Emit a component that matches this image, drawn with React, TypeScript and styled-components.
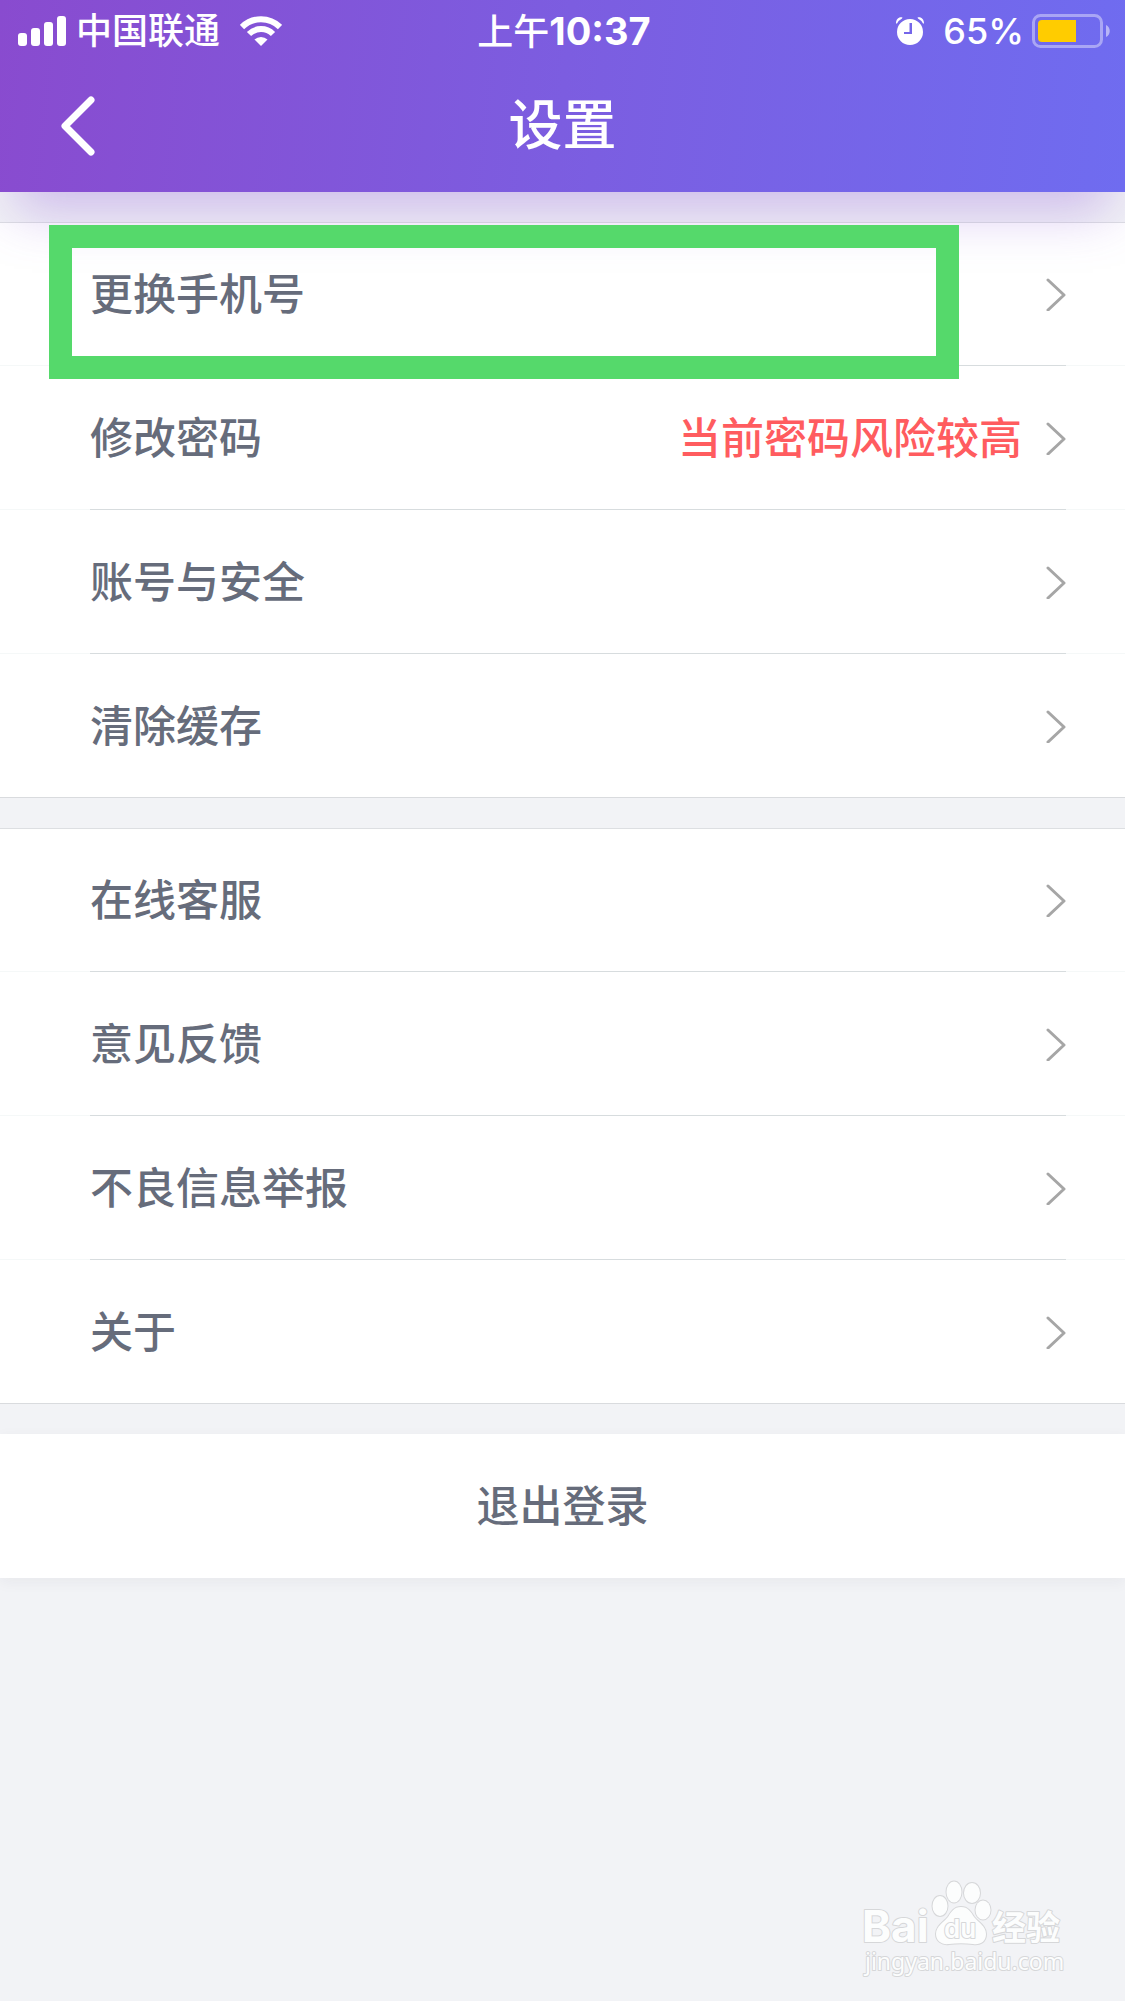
import React from 'react';
import styled, { createGlobalStyle } from 'styled-components';

const GlobalStyle = createGlobalStyle`
  *, *::before, *::after { box-sizing: border-box; }
  body {
    margin: 0;
    background: #f2f3f6;
    font-family: Inter, "Noto Sans CJK SC", sans-serif;
    color: #666c7b;
  }
`;

const Page = styled.div`
  position: relative;
  display: flex;
  flex-direction: column;
  min-height: 100vh;
`;

const Header = styled.header`
  position: relative;
  z-index: 1;
  color: #fff;
  background: linear-gradient(96deg, #894bcf 0%, #7c5de0 50%, #6f6cf0 100%);
  box-shadow: 0 34px 50px -14px rgba(140, 90, 215, 0.36);
`;

const StatusBar = styled.div`
  display: grid;
  grid-template-columns: 1fr auto 1fr;
  align-items: center;
  height: 60px;
  padding: 2px 15px 0 18px;
  font-size: 36px;
  line-height: 44px;
  font-weight: 500;
`;

const StatusGroup = styled.div<{ $end?: boolean }>`
  display: flex;
  align-items: center;
  justify-content: ${(p) => (p.$end ? 'flex-end' : 'flex-start')};
`;

const Carrier = styled.span`
  margin: 0 20px 0 10px;
`;

const Clock = styled.time`
  b {
    font-size: 38px;
    font-weight: 700;
  }
`;

const Percent = styled.span`
  margin: 0 8px 0 19px;
`;

const NavBar = styled.div`
  display: grid;
  grid-template-columns: 120px 1fr 120px;
  align-items: center;
  height: 132px;
`;

const BackButton = styled.button`
  display: flex;
  align-items: center;
  height: 100%;
  padding: 0 0 0 60px;
  border: 0;
  background: none;
  color: inherit;
  cursor: pointer;
`;

const Title = styled.h1`
  margin: 0;
  font-size: 54px;
  line-height: 80px;
  font-weight: 500;
  text-align: center;
`;

const Main = styled.main`
  display: flex;
  flex-direction: column;
  gap: 30px;
  padding-top: 30px;
`;

const Group = styled.section`
  position: relative;
`;

const List = styled.ul`
  margin: 0;
  padding: 0;
  list-style: none;
  background: #fff;
  box-shadow: inset 0 1px 0 #dddfe2, inset 0 -1px 0 #d9dbde;
`;

const Item = styled.li`
  &:not(:last-child) {
    box-shadow: inset 0 -1px 0 #f5f8f8;
  }
`;

const ItemLink = styled.a`
  display: flex;
  align-items: center;
  gap: 24px;
  height: 144px;
  margin: 0 59px 0 90px;
  font-size: 43px;
  line-height: 60px;
  font-weight: 500;
  color: inherit;
  text-decoration: none;

  ${Item}:not(:last-child) > & {
    box-shadow: inset 0 -1px 0 #d7dcde;
  }
`;

const ItemLabel = styled.span`
  flex: 1;
`;

const Warning = styled.span`
  color: #ff5c5f;
`;

const Highlight = styled.div`
  position: absolute;
  z-index: 2;
  top: 3px;
  left: 49px;
  right: 166px;
  height: 154px;
  border: 23px solid #55d96b;
  pointer-events: none;
`;

const LogoutButton = styled.button`
  height: 144px;
  border: 0;
  background: #fff;
  box-shadow: 0 4px 14px rgba(40, 44, 56, 0.05);
  color: inherit;
  font: inherit;
  font-size: 43px;
  line-height: 60px;
  font-weight: 500;
  cursor: pointer;
`;

const Watermark = styled.svg`
  position: absolute;
  right: 53px;
  bottom: 17px;

  .shape,
  text {
    fill: #fcfdfd;
    stroke: #d6d7d9;
    stroke-width: 2px;
    stroke-linejoin: round;
    paint-order: stroke;
  }
`;

const SignalIcon = () => (
  <svg width="48" height="30" viewBox="0 0 48 30" fill="currentColor" aria-hidden="true">
    <rect x="0" y="17" width="9" height="13" rx="3" />
    <rect x="13" y="12" width="9" height="18" rx="3" />
    <rect x="26" y="6" width="9" height="24" rx="3" />
    <rect x="39" y="0" width="9" height="30" rx="3" />
  </svg>
);

const WifiIcon = () => (
  <svg width="42" height="30" viewBox="0 0 42 30" fill="none" stroke="currentColor" aria-hidden="true">
    <path d="M2 11A27 27 0 0 1 40 11" strokeWidth="6" />
    <path d="M9 18A17 17 0 0 1 33 18" strokeWidth="6" />
    <path d="M14.5 23.5A9.5 9.5 0 0 1 27.5 23.5L21 30Z" fill="currentColor" stroke="none" />
  </svg>
);

const AlarmIcon = () => (
  <svg width="28" height="28" viewBox="0 0 28 28" fill="currentColor" aria-hidden="true">
    <path fillRule="evenodd" d="M14 2a13 13 0 1 0 0 26a13 13 0 0 0 0-26ZM13.5 6H16v11H8v-2h5.5Z" />
    <path d="M0 6.5C0 2 3 -.5 6.5 .5L6 1.5Q3 3 1 6.5Z" />
    <path d="M28 6.5C28 2 25 -.5 21.5 .5L22 1.5Q25 3 27 6.5Z" />
  </svg>
);

const BatteryIcon = () => (
  <svg width="78" height="34" viewBox="0 0 78 34" aria-hidden="true">
    <rect x="1.5" y="1.5" width="68" height="31" rx="7" fill="none" stroke="#fff" strokeOpacity="0.4" strokeWidth="3" />
    <path d="M10 6H44V28H10a4 4 0 0 1-4-4V10a4 4 0 0 1 4-4Z" fill="#ffcc00" />
    <path d="M74 11c5 2 5 10 0 12Z" fill="#fff" fillOpacity="0.5" />
  </svg>
);

const BackIcon = () => (
  <svg width="36" height="60" viewBox="0 0 36 60" fill="none" stroke="currentColor" strokeWidth="7" strokeLinecap="round" strokeLinejoin="round" aria-hidden="true">
    <path d="M31 4L5 30L31 56" />
  </svg>
);

const ChevronIcon = () => (
  <svg width="20" height="34" viewBox="0 0 20 34" fill="none" stroke="#a6a6a6" strokeWidth="3" strokeLinecap="round" strokeLinejoin="round" aria-hidden="true">
    <path d="M2 3L18 18L2 33" />
  </svg>
);

const BaiduWatermark = () => (
  <Watermark width="210" height="104" viewBox="0 0 210 104" role="img" aria-label="Baidu 经验">
    <text x="0" y="62" fontFamily="Inter, sans-serif" fontWeight="700" fontSize="44">Bai</text>
    <ellipse className="shape" cx="78" cy="26" rx="7.5" ry="10" />
    <ellipse className="shape" cx="92" cy="12" rx="7.5" ry="10.5" />
    <ellipse className="shape" cx="110" cy="13" rx="8" ry="10" />
    <ellipse className="shape" cx="121" cy="30" rx="7.5" ry="9.5" />
    <path className="shape" d="M99 27C106 27 109 32 112 37C116 42 124 46 124 54C124 62 118 65 111 64C103 63 95 63 87 64C80 65 74 61 74 54C74 46 82 42 86 37C89 32 92 27 99 27Z" />
    <text x="82" y="58" fontFamily="Inter, sans-serif" fontWeight="600" fontSize="26">du</text>
    <text x="130" y="60" fontFamily="Noto Sans CJK SC, sans-serif" fontWeight="700" fontSize="34">经验</text>
    <text x="3" y="90" fontFamily="Noto Sans, sans-serif" fontSize="23">jingyan.baidu.com</text>
  </Watermark>
);

type Entry = { label: string; warning?: string };

const account: Entry[] = [
  { label: '更换手机号' },
  { label: '修改密码', warning: '当前密码风险较高' },
  { label: '账号与安全' },
  { label: '清除缓存' },
];

const support: Entry[] = [
  { label: '在线客服' },
  { label: '意见反馈' },
  { label: '不良信息举报' },
  { label: '关于' },
];

const Entries = ({ entries }: { entries: Entry[] }) => (
  <List>
    {entries.map(({ label, warning }) => (
      <Item key={label}>
        <ItemLink href="#">
          <ItemLabel>{label}</ItemLabel>
          {warning && <Warning>{warning}</Warning>}
          <ChevronIcon />
        </ItemLink>
      </Item>
    ))}
  </List>
);

export default function App() {
  return (
    <Page lang="zh-CN">
      <GlobalStyle />
      <Header>
        <StatusBar>
          <StatusGroup>
            <SignalIcon />
            <Carrier>中国联通</Carrier>
            <WifiIcon />
          </StatusGroup>
          <Clock>上午<b>10:37</b></Clock>
          <StatusGroup $end>
            <AlarmIcon />
            <Percent>65%</Percent>
            <BatteryIcon />
          </StatusGroup>
        </StatusBar>
        <NavBar>
          <BackButton type="button" aria-label="返回">
            <BackIcon />
          </BackButton>
          <Title>设置</Title>
        </NavBar>
      </Header>
      <Main>
        <Group>
          <Entries entries={account} />
          <Highlight />
        </Group>
        <Group>
          <Entries entries={support} />
        </Group>
        <LogoutButton type="button">退出登录</LogoutButton>
      </Main>
      <BaiduWatermark />
    </Page>
  );
}
